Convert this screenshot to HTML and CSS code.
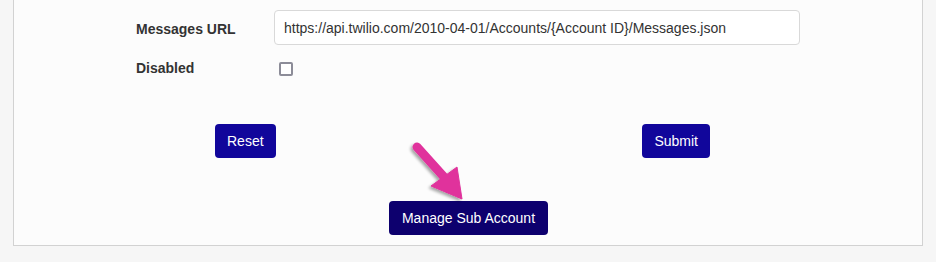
FILE: index.html
```html
<!DOCTYPE html>
<html>
<head>
<meta charset="utf-8">
<link rel="stylesheet" href="styles.css">
</head>
<body>
<div class="page">
  <div class="panel">
    <div class="form">
      <label class="label label-url">Messages URL</label>
      <div class="field"><input class="text-input" type="text" value="https://api.twilio.com/2010-04-01/Accounts/{Account ID}/Messages.json"></div>
      <label class="label label-dis">Disabled</label>
      <div class="field"><input class="check" type="checkbox"></div>
    </div>
    <div class="actions">
      <button class="btn">Reset</button>
      <button class="btn">Submit</button>
    </div>
    <div class="sub-row">
      <button class="btn btn-dark">Manage Sub Account</button>
    </div>
    <svg class="arrow" width="80" height="80" viewBox="0 0 80 80">
      <defs>
        <filter id="sh" x="-30%" y="-30%" width="160%" height="160%">
          <feGaussianBlur in="SourceAlpha" stdDeviation="1.5"/>
          <feOffset dx="-2" dy="2" result="b"/>
          <feComponentTransfer><feFuncA type="linear" slope="0.35"/></feComponentTransfer>
          <feMerge><feMergeNode/><feMergeNode in="SourceGraphic"/></feMerge>
        </filter>
      </defs>
      <g filter="url(#sh)" fill="#e0339c" stroke="#e0339c">
        <line x1="17" y1="16" x2="44" y2="46" stroke-width="9" stroke-linecap="round"/>
        <polygon points="31,55 57,36 62,68" stroke-width="1" stroke-linejoin="round"/>
      </g>
    </svg>
  </div>
</div>
</body>
</html>
```

FILE: styles.css
```css
html, body {
  margin: 0;
  padding: 0;
  background: #f6f6f6;
  font-family: "Liberation Sans", Arial, sans-serif;
  font-size: 14px;
  color: #333;
}
.page {
  padding: 0 13px 15px 13px;
}
.panel {
  position: relative;
  background: #fcfcfc;
  border: 1px solid #d2d2d2;
  border-top: none;
  height: 246px;
  box-sizing: border-box;
  padding-top: 10px;
}
.form {
  display: grid;
  grid-template-columns: 138px 526px;
  grid-template-rows: 35px 19px;
  row-gap: 14px;
  margin-left: 122px;
  align-items: center;
}
.label {
  font-weight: bold;
  color: #333;
}
.label-url {
  padding-top: 3px;
}
.label-dis {
  margin-top: -1px;
}
.field {
  display: flex;
  align-items: center;
}
.text-input {
  width: 526px;
  height: 35px;
  box-sizing: border-box;
  border: 1px solid #d9d9d9;
  border-radius: 4px;
  background: #fff;
  padding: 0 9px;
  font-family: "Liberation Sans", Arial, sans-serif;
  font-size: 14px;
  color: #333;
  outline: none;
}
.check {
  appearance: none;
  -webkit-appearance: none;
  width: 14px;
  height: 14px;
  box-sizing: border-box;
  margin: 0 0 0 5px;
  border: 2px solid #8c8c98;
  border-radius: 2px;
  background: #fff;
}
.actions {
  display: flex;
  justify-content: space-between;
  padding: 0 212px 0 201px;
  margin-top: 46px;
}
.btn {
  height: 34px;
  box-sizing: border-box;
  padding: 0 12px;
  border: none;
  border-radius: 4px;
  background: #11069b;
  color: #fff;
  font-family: "Liberation Sans", Arial, sans-serif;
  font-size: 14px;
}
.sub-row {
  display: flex;
  justify-content: center;
  margin-top: 43px;
  padding-left: 1px;
}
.btn-dark {
  background: #0d006e;
  padding: 0 13px;
}
.arrow {
  position: absolute;
  left: 386px;
  top: 131px;
}
```
